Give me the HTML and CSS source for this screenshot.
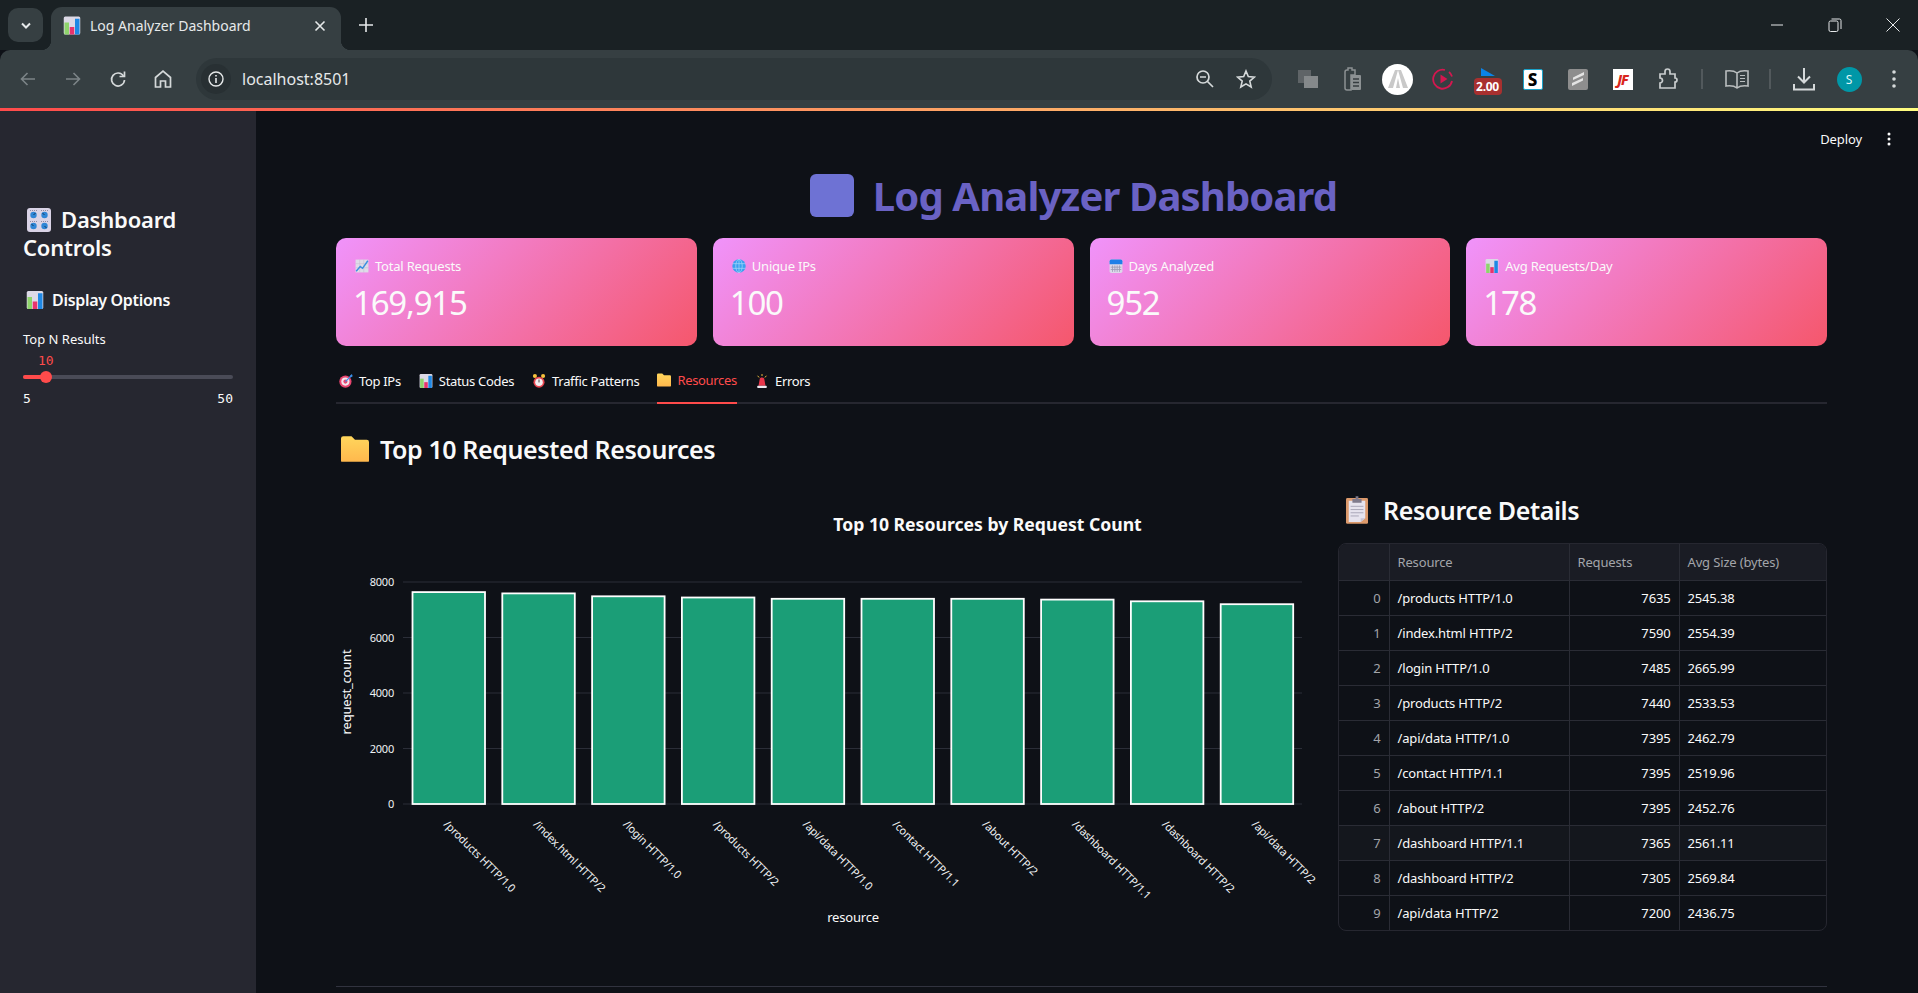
FILE: index.html
```html
<!DOCTYPE html>
<html lang="en">
<head>
    <meta charset="UTF-8">
    <meta name="viewport" content="width=device-width, initial-scale=1.0">
    <title>Log Analyzer Dashboard</title>
    <link rel="stylesheet" href="styles.css">
</head>
<body>
    <!-- emoji drawn once, reused below -->
    <svg class="defs" aria-hidden="true">
        <defs>
            <linearGradient id="folder-fill" x1="0" y1="0" x2="0" y2="1">
                <stop offset="0" stop-color="#ffd65c"/>
                <stop offset="1" stop-color="#ffb84d"/>
            </linearGradient>
        </defs>
        <symbol id="i-bars" viewBox="0 0 24 24">
            <rect x="1" y="0" width="22" height="24" rx="2" fill="#dcd9e6"/>
            <rect x="2" y="8" width="6" height="16" fill="#8ed46b"/>
            <rect x="9" y="14" width="6" height="10" fill="#e8336d"/>
            <rect x="16" y="3" width="6" height="21" fill="#1e88e5"/>
        </symbol>
        <symbol id="i-controls" viewBox="0 0 24 24">
            <rect x="0" y="0" width="24" height="24" rx="3" fill="#d9d3e6"/>
            <g fill="#2f86d6">
                <circle cx="6.500" cy="7" r="3.200"/><circle cx="17.500" cy="7" r="3.200"/>
                <circle cx="6.500" cy="18" r="3.200"/><circle cx="17.500" cy="18" r="3.200"/>
            </g>
            <g stroke="#12395f" stroke-width="1">
                <path d="M6.500 7L8.500 5M17.500 7L15.500 5M6.500 18L4.500 16M17.500 18L19.500 20"/>
            </g>
            <path d="M3 2.500H10M14 2.500H21M3 13.500H10M14 13.500H21" stroke="#8f8ba3" stroke-width="1" stroke-dasharray="1 1"/>
        </symbol>
        <symbol id="i-chart" viewBox="0 0 24 24">
            <rect x="1" y="1" width="22" height="22" fill="#dedbe8"/>
            <path d="M1 8H23M1 15H23M8 1V23M15 1V23" stroke="#c4c0d2" stroke-width="1"/>
            <path d="M2 21L9 13L13 16L22 3" fill="none" stroke="#3b8fe0" stroke-width="2.500"/>
        </symbol>
        <symbol id="i-globe" viewBox="0 0 24 24">
            <circle cx="12" cy="12" r="11.500" fill="#3aa0ef"/>
            <g fill="none" stroke="#a9d8fb" stroke-width="1.200">
                <ellipse cx="12" cy="12" rx="5.500" ry="11.500"/>
                <path d="M12 .5V23.500M1 8H23M1 16H23"/>
            </g>
        </symbol>
        <symbol id="i-calendar" viewBox="0 0 24 24">
            <rect x="1" y="1" width="22" height="23" rx="3" fill="#dcd8ea"/>
            <path d="M1 9V4a3 3 0 0 1 3-3H20a3 3 0 0 1 3 3V9Z" fill="#1e7fe8"/>
            <path d="M6 11V22M10 11V22M14 11V22M18 11V22M3 14H21M3 18H21" stroke="#9d9ab5" stroke-width="1.400"/>
        </symbol>
        <symbol id="i-target" viewBox="0 0 24 24">
            <circle cx="11" cy="13" r="10.500" fill="#e8456f"/>
            <circle cx="11" cy="13" r="7" fill="#f3e6ee"/>
            <circle cx="11" cy="13" r="3.500" fill="#e8456f"/>
            <path d="M11 13L21 3" stroke="#3a8ee6" stroke-width="2"/>
            <path d="M18 4L22 0L23.500 4L20 6Z" fill="#3a8ee6"/>
        </symbol>
        <symbol id="i-alarm" viewBox="0 0 24 24">
            <circle cx="12" cy="14" r="9.500" fill="#e8454f"/>
            <circle cx="12" cy="14" r="6.500" fill="#f4eef0"/>
            <path d="M12 9.500V14.500" stroke="#333" stroke-width="1.500"/>
            <circle cx="5" cy="3.500" r="3.500" fill="#f7c23c"/>
            <circle cx="19" cy="3.500" r="3.500" fill="#f7c23c"/>
        </symbol>
        <symbol id="i-folder" viewBox="0 0 24 24">
            <path d="M0 3a2 2 0 0 1 2-2H9L12 4H22a2 2 0 0 1 2 2V22a1 1 0 0 1-1 1H1a1 1 0 0 1-1-1Z" fill="url(#folder-fill)"/>
        </symbol>
        <symbol id="i-siren" viewBox="0 0 24 24">
            <path d="M8 9C8 7 10 6 12 6C14 6 16 7 16 9L18 20H6Z" fill="#e8354a"/>
            <rect x="4" y="20" width="16" height="4" rx="1" fill="#ece8f0"/>
            <path d="M12 0V3.500M4.500 3L7 6M19.500 3L17 6" stroke="#f7c23c" stroke-width="1.600"/>
        </symbol>
        <symbol id="i-clipboard" viewBox="0 0 24 30">
            <rect x="0" y="2" width="24" height="28" rx="1.500" fill="#dc9a6c"/>
            <path d="M3 5H21V24L16 28H3Z" fill="#e6e3ee"/>
            <path d="M16 28V24H21Z" fill="#c7c3d3"/>
            <path d="M5 11H19M5 14.500H19M5 18H19M5 21.500H14" stroke="#a5a2b5" stroke-width="1"/>
            <path d="M7 7V3H10.500V0H13.500V3H17V7Z" fill="#7f7a8c"/>
        </symbol>
    </svg>

    <div class="tabstrip">
        <div class="tab-search">
            <svg width="14" height="14" viewBox="0 0 14 14"><path d="M3 5.500L7 9.500L11 5.500" fill="none" stroke="#e6e9ea" stroke-width="2"/></svg>
        </div>
        <div class="tab">
            <svg class="tab-icon" width="18" height="19"><use href="#i-bars"/></svg>
            <span class="tab-title">Log Analyzer Dashboard</span>
            <svg class="tab-close" width="12" height="12" viewBox="0 0 12 12"><path d="M1.500 1.500L10.500 10.500M10.500 1.500L1.500 10.500" stroke="#e6e9ea" stroke-width="1.600"/></svg>
        </div>
        <svg class="tab-new" width="14" height="14" viewBox="0 0 14 14"><path d="M7 0V14M0 7H14" stroke="#e6e9ea" stroke-width="1.600"/></svg>
        <div class="win-controls">
            <svg width="14" height="14" viewBox="0 0 14 14"><path d="M1 7H13" stroke="#e6e9ea" stroke-width="1"/></svg>
            <svg width="14" height="14" viewBox="0 0 14 14"><rect x="1" y="3" width="9" height="10.500" rx="1.500" fill="none" stroke="#e6e9ea"/><path d="M3.500 1H11.500A1.500 1.500 0 0 1 13 2.500V11" fill="none" stroke="#e6e9ea"/></svg>
            <svg width="14" height="14" viewBox="0 0 14 14"><path d="M.5 .5L13.500 13.500M13.500 .5L.5 13.500" stroke="#e6e9ea" stroke-width="1"/></svg>
        </div>
    </div>

    <div class="toolbar">
        <div class="tb-btn"><svg width="18" height="18" viewBox="0 0 18 18"><path d="M16 9H2.500M8.500 3L2.500 9L8.500 15" fill="none" stroke="#7c8487" stroke-width="1.600"/></svg></div>
        <div class="tb-btn"><svg width="18" height="18" viewBox="0 0 18 18"><path d="M2 9H15.500M9.500 3L15.500 9L9.500 15" fill="none" stroke="#7c8487" stroke-width="1.600"/></svg></div>
        <div class="tb-btn"><svg width="18" height="18" viewBox="0 0 18 18"><path d="M14.500 6A6.500 6.500 0 1 0 15.500 10" fill="none" stroke="#d5d9da" stroke-width="1.700"/><path d="M15.500 1.500V6.500H10.500" fill="none" stroke="#d5d9da" stroke-width="1.700"/></svg></div>
        <div class="tb-btn"><svg width="18" height="20" viewBox="0 0 18 20"><path d="M1.500 8.500L9 2L16.500 8.500V18H11.500V12H6.500V18H1.500Z" fill="none" stroke="#d5d9da" stroke-width="1.700"/></svg></div>
        <div class="omnibox">
            <div class="info-chip">
                <svg width="16" height="16" viewBox="0 0 16 16"><circle cx="8" cy="8" r="7" fill="none" stroke="#e6e9ea" stroke-width="1.400"/><path d="M8 7V12M8 4V5.600" stroke="#e6e9ea" stroke-width="1.600"/></svg>
            </div>
            <span class="url">localhost:8501</span>
            <div class="omni-actions">
                <svg width="20" height="20" viewBox="0 0 20 20"><circle cx="8" cy="8" r="6" fill="none" stroke="#d5d9da" stroke-width="1.700"/><path d="M12.500 12.500L18 18M5 8H11" stroke="#d5d9da" stroke-width="1.700"/></svg>
                <svg width="20" height="20" viewBox="0 0 20 20"><path d="M10 2L12.300 7.600L18.400 8.100L13.800 12.100L15.200 18L10 14.900L4.800 18L6.200 12.100L1.600 8.100L7.700 7.600Z" fill="none" stroke="#d5d9da" stroke-width="1.600"/></svg>
            </div>
        </div>
        <div class="extensions">
            <div class="tb-btn"><svg width="20" height="20" viewBox="0 0 20 20"><rect x="0" y="1" width="13" height="13" fill="#5f6467"/><rect x="6" y="7" width="14" height="12" fill="#85898b"/></svg></div>
            <div class="tb-btn"><svg width="18" height="26" viewBox="0 0 18 26"><path d="M1 6a2 2 0 0 1 2-2H4V2H8V4H11V9H7V24H3a2 2 0 0 1-2-2Z" fill="none" stroke="#8c9193" stroke-width="1.500"/><rect x="7" y="9" width="10" height="15" rx="1" fill="#8c9193"/><path d="M9 13H15M9 16.500H15M9 20H15" stroke="#363d40" stroke-width="1.300"/></svg></div>
            <div class="tb-btn"><div class="ext-m"><svg width="20" height="18" viewBox="0 0 20 18"><path d="M0 18L7 0H10L5 18ZM20 18L13 0H10L15 18ZM8 18L10 8L12 18Z" fill="#c9c9c9"/></svg></div></div>
            <div class="tb-btn"><svg width="22" height="22" viewBox="0 0 22 22"><path d="M13 2A9.500 9.500 0 1 0 20 13" fill="none" stroke="#d4174f" stroke-width="1.800"/><path d="M20 8.500A9.500 9.500 0 0 0 17 4" fill="none" stroke="#d4174f" stroke-width="1.800"/><path d="M8.500 6.500L15.500 11L8.500 15.500Z" fill="#d4174f"/></svg></div>
            <div class="tb-btn ext-speed">
                <svg width="14" height="8" viewBox="0 0 14 8"><path d="M0 8L14 8L0 0Z" fill="#0a84e8"/></svg>
                <span class="speed-badge">2.00</span>
            </div>
            <div class="tb-btn"><span class="ext-s">S</span></div>
            <div class="tb-btn"><div class="ext-gray"><svg width="14" height="16" viewBox="0 0 14 16"><path d="M13 1L2 6.500V9L13 4ZM12 7L1 12V15L12 9.500Z" fill="#e4e4e4"/></svg></div></div>
            <div class="tb-btn"><span class="ext-jf">JF</span></div>
            <div class="tb-btn"><svg width="20" height="22" viewBox="0 0 20 22"><path d="M2 6H7V3.500a2.500 2.500 0 0 1 5 0V6H17V10a2 2 0 0 1 0 4V20H2V15a2.500 2.500 0 0 0 0-5Z" fill="none" stroke="#c9cdce" stroke-width="1.700"/></svg></div>
        </div>
        <div class="tb-sep"><i></i></div>
        <div class="tb-btn tb-book"><svg width="24" height="20" viewBox="0 0 24 20"><path d="M12 4C9 1.500 5 1.500 1 2V17C5 16.500 9 16.500 12 19C15 16.500 19 16.500 23 17V2C19 1.500 15 1.500 12 4ZM12 4V19" fill="none" stroke="#b9bdbe" stroke-width="1.600"/><path d="M15 6.500H20M15 9.500H20M15 12.500H20" stroke="#b9bdbe" stroke-width="1.200"/></svg></div>
        <div class="tb-sep tb-sep-2"><i></i></div>
        <div class="tb-btn tb-download"><svg width="22" height="24" viewBox="0 0 22 24"><path d="M11 1V15M5 9.500L11 15.500L17 9.500" fill="none" stroke="#d5d9da" stroke-width="2"/><path d="M1 17V22.500H21V17" fill="none" stroke="#d5d9da" stroke-width="2"/></svg></div>
        <div class="tb-btn tb-avatar"><span class="avatar">S</span></div>
        <div class="tb-btn tb-menu"><svg width="6" height="20" viewBox="0 0 6 20"><circle cx="3" cy="3" r="1.800" fill="#d5d9da"/><circle cx="3" cy="10" r="1.800" fill="#d5d9da"/><circle cx="3" cy="17" r="1.800" fill="#d5d9da"/></svg></div>
    </div>
    <div class="decoration"></div>

    <div class="app">
        <aside class="sidebar">
            <h2 class="side-title"><svg class="side-title-icon" width="24" height="24"><use href="#i-controls"/></svg>Dashboard Controls</h2>
            <h3 class="side-sub"><svg width="18" height="18"><use href="#i-bars"/></svg>Display Options</h3>
            <div class="slider-label">Top N Results</div>
            <div class="slider-value">10</div>
            <div class="slider-track">
                <div class="slider-fill" style="width: 23px"></div>
                <div class="slider-thumb" style="left: 23px"></div>
            </div>
            <div class="slider-range"><span>5</span><span>50</span></div>
        </aside>

        <main class="main">
            <div class="app-header">
                <span class="deploy">Deploy</span>
                <svg width="4" height="14" viewBox="0 0 4 14"><circle cx="2" cy="2" r="1.500" fill="#fafafa"/><circle cx="2" cy="7" r="1.500" fill="#fafafa"/><circle cx="2" cy="12" r="1.500" fill="#fafafa"/></svg>
            </div>
            <div class="block">
                <h1 class="page-title"><span class="title-icon"></span><span class="title-text">Log Analyzer Dashboard</span></h1>

                <div class="metrics">
                    <div class="metric">
                        <div class="metric-label"><svg width="14" height="14"><use href="#i-chart"/></svg>Total Requests</div>
                        <div class="metric-value">169,915</div>
                    </div>
                    <div class="metric">
                        <div class="metric-label"><svg width="14" height="14"><use href="#i-globe"/></svg>Unique IPs</div>
                        <div class="metric-value">100</div>
                    </div>
                    <div class="metric">
                        <div class="metric-label"><svg width="14" height="14"><use href="#i-calendar"/></svg>Days Analyzed</div>
                        <div class="metric-value">952</div>
                    </div>
                    <div class="metric">
                        <div class="metric-label"><svg width="14" height="14"><use href="#i-bars"/></svg>Avg Requests/Day</div>
                        <div class="metric-value">178</div>
                    </div>
                </div>

                <div class="tabs">
                    <div class="tab-item"><svg width="14" height="14"><use href="#i-target"/></svg>Top IPs</div>
                    <div class="tab-item"><svg width="14" height="14"><use href="#i-bars"/></svg>Status Codes</div>
                    <div class="tab-item"><svg width="14" height="14"><use href="#i-alarm"/></svg>Traffic Patterns</div>
                    <div class="tab-item active"><svg width="14" height="14"><use href="#i-folder"/></svg>Resources</div>
                    <div class="tab-item"><svg width="14" height="14"><use href="#i-siren"/></svg>Errors</div>
                </div>

                <h2 class="section-title"><svg width="28" height="28"><use href="#i-folder"/></svg>Top 10 Requested Resources</h2>

                <div class="columns">
                    <!-- chart drawn in page coordinates -->
                    <svg class="chart" width="986" height="500" viewBox="336 475 986 500">
                        <g class="grid">
                            <path d="M403 582H1302M403 637.500H1302M403 693H1302M403 748.500H1302M403 804H1302"/>
                        </g>
                        <g class="bars">
                            <rect x="412.500" y="592.100" width="72.500" height="211.900"/>
                            <rect x="502.300" y="593.400" width="72.500" height="210.600"/>
                            <rect x="592.100" y="596.300" width="72.500" height="207.700"/>
                            <rect x="681.900" y="597.500" width="72.500" height="206.500"/>
                            <rect x="771.700" y="598.800" width="72.500" height="205.200"/>
                            <rect x="861.500" y="598.800" width="72.500" height="205.200"/>
                            <rect x="951.300" y="598.800" width="72.500" height="205.200"/>
                            <rect x="1041.100" y="599.600" width="72.500" height="204.400"/>
                            <rect x="1130.900" y="601.300" width="72.500" height="202.700"/>
                            <rect x="1220.700" y="604.200" width="72.500" height="199.800"/>
                        </g>
                        <text class="chart-title" x="987.500" y="531" text-anchor="middle">Top 10 Resources by Request Count</text>
                        <g class="tick" text-anchor="end">
                            <text x="394" y="586">8000</text>
                            <text x="394" y="642">6000</text>
                            <text x="394" y="697">4000</text>
                            <text x="394" y="753">2000</text>
                            <text x="394" y="808">0</text>
                        </g>
                        <g class="tick">
                            <text transform="translate(443 825) rotate(45)">/products HTTP/1.0</text>
                            <text transform="translate(532.800 825) rotate(45)">/index.html HTTP/2</text>
                            <text transform="translate(622.600 825) rotate(45)">/login HTTP/1.0</text>
                            <text transform="translate(712.400 825) rotate(45)">/products HTTP/2</text>
                            <text transform="translate(802.200 825) rotate(45)">/api/data HTTP/1.0</text>
                            <text transform="translate(892 825) rotate(45)">/contact HTTP/1.1</text>
                            <text transform="translate(981.800 825) rotate(45)">/about HTTP/2</text>
                            <text transform="translate(1071.600 825) rotate(45)">/dashboard HTTP/1.1</text>
                            <text transform="translate(1161.400 825) rotate(45)">/dashboard HTTP/2</text>
                            <text transform="translate(1251.200 825) rotate(45)">/api/data HTTP/2</text>
                        </g>
                        <text class="axis-title" x="853" y="922" text-anchor="middle">resource</text>
                        <text class="axis-title" transform="translate(351 692) rotate(-90)" text-anchor="middle">request_count</text>
                    </svg>

                    <div class="details">
                        <h2 class="details-title"><svg width="22" height="28"><use href="#i-clipboard"/></svg>Resource Details</h2>
                        <div class="table-wrap">
                            <table class="data-table">
                                <colgroup><col class="col-idx"><col class="col-res"><col class="col-req"><col></colgroup>
                                <thead>
                                    <tr><th></th><th>Resource</th><th>Requests</th><th>Avg Size (bytes)</th></tr>
                                </thead>
                                <tbody>
                                    <tr><td class="idx">0</td><td>/products HTTP/1.0</td><td class="num">7635</td><td>2545.38</td></tr>
                                    <tr><td class="idx">1</td><td>/index.html HTTP/2</td><td class="num">7590</td><td>2554.39</td></tr>
                                    <tr><td class="idx">2</td><td>/login HTTP/1.0</td><td class="num">7485</td><td>2665.99</td></tr>
                                    <tr><td class="idx">3</td><td>/products HTTP/2</td><td class="num">7440</td><td>2533.53</td></tr>
                                    <tr><td class="idx">4</td><td>/api/data HTTP/1.0</td><td class="num">7395</td><td>2462.79</td></tr>
                                    <tr><td class="idx">5</td><td>/contact HTTP/1.1</td><td class="num">7395</td><td>2519.96</td></tr>
                                    <tr><td class="idx">6</td><td>/about HTTP/2</td><td class="num">7395</td><td>2452.76</td></tr>
                                    <tr class="hover"><td class="idx">7</td><td>/dashboard HTTP/1.1</td><td class="num">7365</td><td>2561.11</td></tr>
                                    <tr><td class="idx">8</td><td>/dashboard HTTP/2</td><td class="num">7305</td><td>2569.84</td></tr>
                                    <tr><td class="idx">9</td><td>/api/data HTTP/2</td><td class="num">7200</td><td>2436.75</td></tr>
                                </tbody>
                            </table>
                        </div>
                    </div>
                </div>

                <hr class="rule">
            </div>
        </main>
    </div>
</body>
</html>
```

FILE: styles.css
```css
* {
    box-sizing: border-box;
}
html, body {
    margin: 0;
    height: 993px;
    overflow: hidden;
}
body {
    width: 1918px;
    font-family: "Noto Sans", sans-serif;
    font-size: 13px;
    color: #fafafa;
    background: #0e1117;
}
h1, h2, h3 {
    margin: 0;
}
/* not display:none, the gradient would stop resolving */
.defs {
    position: absolute;
    width: 0;
    height: 0;
}

/* browser chrome */
.tabstrip {
    display: flex;
    align-items: flex-start;
    height: 50px;
    padding-left: 8px;
    background: #1a2124;
}
.tab-search {
    display: flex;
    align-items: center;
    justify-content: center;
    width: 35px;
    height: 34px;
    margin-top: 8px;
    border-radius: 10px;
    background: #363f42;
}
.tab {
    position: relative;
    display: flex;
    align-items: center;
    width: 290px;
    height: 43px;
    margin: 7px 0 0 8px;
    padding: 0 15px 6px 12px;
    border-radius: 11px 11px 0 0;
    background: #363f42;
}
.tab::before,
.tab::after {
    content: "";
    position: absolute;
    bottom: 0;
    width: 10px;
    height: 10px;
}
.tab::before {
    left: -10px;
    background: radial-gradient(circle at 0 0, transparent 10px, #363f42 10.500px);
}
.tab::after {
    right: -10px;
    background: radial-gradient(circle at 100% 0, transparent 10px, #363f42 10.500px);
}
.tab-title {
    margin-left: 9px;
    font-size: 14px;
    color: #e6e9ea;
}
.tab-close {
    margin-left: auto;
}
.tab-new {
    margin: 18px 0 0 18px;
}
.win-controls {
    display: flex;
    gap: 44px;
    margin: 18px 18px 0 auto;
}

.toolbar {
    display: flex;
    align-items: center;
    height: 58px;
    padding-left: 5px;
    border-radius: 10px 10px 0 0;
    background: #363f42;
    margin-top: 0;
}
.tb-btn {
    display: flex;
    align-items: center;
    justify-content: center;
    flex: none;
    width: 45px;
    height: 44px;
}
.omnibox {
    display: flex;
    align-items: center;
    flex: none;
    width: 1076px;
    height: 42px;
    margin-left: 11px;
    padding-left: 5px;
    border-radius: 21px;
    background: #2e373a;
}
.info-chip {
    display: flex;
    align-items: center;
    justify-content: center;
    width: 30px;
    height: 30px;
    border-radius: 50%;
    background: #283033;
}
.url {
    margin-left: 11px;
    font-size: 16px;
    color: #e6e9ea;
}
.omni-actions {
    display: flex;
    gap: 21px;
    margin-left: auto;
    padding-right: 16px;
}
.extensions {
    display: flex;
    margin-left: 13px;
}
.ext-m {
    display: flex;
    align-items: center;
    justify-content: center;
    width: 31px;
    height: 31px;
    border-radius: 50%;
    background: #fff;
}
.ext-speed {
    flex-direction: column;
    gap: 2px;
    padding-top: 4px;
}
.speed-badge {
    width: 28px;
    height: 17px;
    border-radius: 4px;
    background: #a8302f;
    font-size: 12px;
    font-weight: 700;
    line-height: 17px;
    letter-spacing: -.3px;
    text-align: center;
    color: #fff;
}
.ext-s {
    display: block;
    width: 20px;
    height: 21px;
    border: 1px solid #1aa2c9;
    border-radius: 2px;
    background: #fff;
    font-size: 17px;
    font-weight: 800;
    line-height: 19px;
    text-align: center;
    color: #000;
}
.ext-gray {
    display: flex;
    align-items: center;
    justify-content: center;
    width: 20px;
    height: 21px;
    border-radius: 2px;
    background: #8e8e8e;
}
.ext-jf {
    display: block;
    width: 20px;
    height: 21px;
    background: #fff;
    font-size: 14px;
    font-style: italic;
    font-weight: 800;
    line-height: 21px;
    letter-spacing: -1px;
    text-align: center;
    color: #d9261c;
}
.tb-sep {
    display: flex;
    align-items: center;
    justify-content: center;
    flex: none;
    width: 24px;
}
.tb-sep i {
    width: 2px;
    height: 20px;
    background: #52595c;
}
.tb-book {
    width: 46px;
}
.tb-sep-2 {
    width: 20px;
}
.tb-download {
    width: 48px;
}
.tb-avatar {
    width: 42px;
}
.tb-menu {
    width: 48px;
}
.avatar {
    width: 25px;
    height: 25px;
    border-radius: 50%;
    background: #0097a7;
    font-size: 12px;
    line-height: 25px;
    text-align: center;
    color: #dff5f7;
}
.decoration {
    height: 3px;
    background: linear-gradient(90deg, #ff4b4b, #fffd80);
}

/* app layout */
.app {
    display: flex;
    height: 882px;
}
.sidebar {
    flex: none;
    width: 256px;
    padding: 94px 23px 0;
    background: #262730;
}
.side-title {
    font-size: 22px;
    font-weight: 600;
    line-height: 28px;
    letter-spacing: -.2px;
}
.side-title-icon {
    margin: 0 10px 0 4px;
    vertical-align: -4px;
}
.side-sub {
    display: flex;
    align-items: center;
    gap: 8px;
    margin-top: 25px;
    padding-left: 3px;
    font-size: 16px;
    font-weight: 600;
    line-height: 28px;
    letter-spacing: -.3px;
}
.slider-label {
    margin-top: 15px;
    line-height: 20px;
}
.slider-value {
    margin: 4px 0 0 15px;
    font-family: "DejaVu Sans Mono", monospace;
    line-height: 16px;
    color: #ff4b4b;
}
.slider-track {
    position: relative;
    width: 210px;
    height: 4px;
    margin-top: 6px;
    border-radius: 2px;
    background: #4a4b57;
}
.slider-fill {
    height: 4px;
    border-radius: 2px;
    background: #ff4b4b;
}
.slider-thumb {
    position: absolute;
    top: -4px;
    width: 12px;
    height: 12px;
    margin-left: -6px;
    border-radius: 50%;
    background: #ff4b4b;
}
.slider-range {
    display: flex;
    justify-content: space-between;
    width: 210px;
    margin-top: 12px;
    font-family: "DejaVu Sans Mono", monospace;
    line-height: 16px;
}

.main {
    flex: 1;
    min-width: 0;
}
.app-header {
    display: flex;
    align-items: center;
    justify-content: flex-end;
    gap: 25px;
    height: 56px;
    padding: 0 27px 0 0;
}
.deploy {
    font-size: 13px;
    letter-spacing: -.1px;
}
.block {
    padding: 0 91px 0 80px;
}
.page-title {
    display: flex;
    align-items: center;
    justify-content: center;
    gap: 19px;
    height: 56px;
    margin-bottom: 15px;
    padding-right: 16px;
    font-size: 40px;
    font-weight: 700;
    letter-spacing: -.85px;
    color: #6a62c4;
}
.title-icon {
    width: 44px;
    height: 43px;
    border-radius: 6px;
    background: #6e72d4;
}
.metrics {
    display: grid;
    grid-template-columns: repeat(4, 1fr);
    gap: 16px;
}
.metric {
    height: 108px;
    padding: 18px 17px 0;
    border-radius: 10px;
    background: linear-gradient(135deg, #f093fb, #f5576c);
}
.metric-label {
    display: flex;
    align-items: center;
    gap: 6px;
    padding: 0 2px;
    line-height: 20px;
    letter-spacing: -.2px;
}
.metric-value {
    margin-top: 5px;
    font-size: 33px;
    line-height: 44px;
    letter-spacing: -1.200px;
}
.tabs {
    display: flex;
    gap: 18px;
    margin-top: 20px;
    padding-left: 3px;
    border-bottom: 2px solid #262730;
}
.tab-item {
    display: flex;
    align-items: center;
    gap: 6px;
    height: 36px;
    margin-bottom: -2px;
    padding-bottom: 6px;
    letter-spacing: -.32px;
}
.tab-item.active {
    height: 38px;
    padding-bottom: 8px;
    border-bottom: 2px solid #ff4b4b;
    color: #ff4b4b;
}
.section-title {
    display: flex;
    align-items: center;
    gap: 11px;
    height: 40px;
    margin-top: 25px;
    padding-left: 5px;
    font-size: 25px;
    font-weight: 600;
    letter-spacing: -.4px;
}
.columns {
    display: flex;
    gap: 16px;
    margin-top: 6px;
}
.chart {
    flex: none;
    display: block;
}
.grid path {
    fill: none;
    stroke: #2b2e38;
    stroke-width: 1;
}
.bars rect {
    fill: #1b9e77;
    stroke: #fff;
    stroke-width: 1.800;
}
.chart-title {
    font-size: 17.600px;
    font-weight: 700;
    fill: #fafafa;
}
.tick text {
    font-size: 11px;
    letter-spacing: -.2px;
    fill: #eef1f4;
}
.axis-title {
    font-size: 13px;
    letter-spacing: -.2px;
    fill: #fafafa;
}
.details {
    flex: 1;
    min-width: 0;
    padding-top: 15px;
}
.details-title {
    display: flex;
    align-items: center;
    gap: 15px;
    height: 40px;
    margin-bottom: 13px;
    padding-left: 8px;
    font-size: 25px;
    font-weight: 600;
    letter-spacing: -.4px;
}
.table-wrap {
    border: 1px solid #262730;
    border-radius: 8px;
    overflow: hidden;
}
.data-table {
    width: 100%;
    border-collapse: collapse;
    table-layout: fixed;
    line-height: 18px;
    letter-spacing: -.15px;
}
.col-idx {
    width: 50px;
}
.col-res {
    width: 180px;
}
.col-req {
    width: 110px;
}
.data-table th,
.data-table td {
    height: 35px;
    padding: 0 8px;
    border-right: 1px solid #2a2c35;
    border-bottom: 1px solid #2a2c35;
    font-weight: 400;
    text-align: left;
}
.data-table th:last-child,
.data-table td:last-child {
    border-right: 0;
}
.data-table tbody tr:last-child td {
    border-bottom: 0;
}
.data-table th {
    height: 36px;
    background: #1a1c24;
    color: #a3a5aa;
}
.data-table .idx {
    text-align: right;
    color: #a3a5aa;
}
.data-table .num {
    text-align: right;
}
.data-table .hover td {
    background: #14171d;
}
.rule {
    height: 1px;
    margin: 11px 0 0;
    border: 0;
    background: #31333f;
}
```
